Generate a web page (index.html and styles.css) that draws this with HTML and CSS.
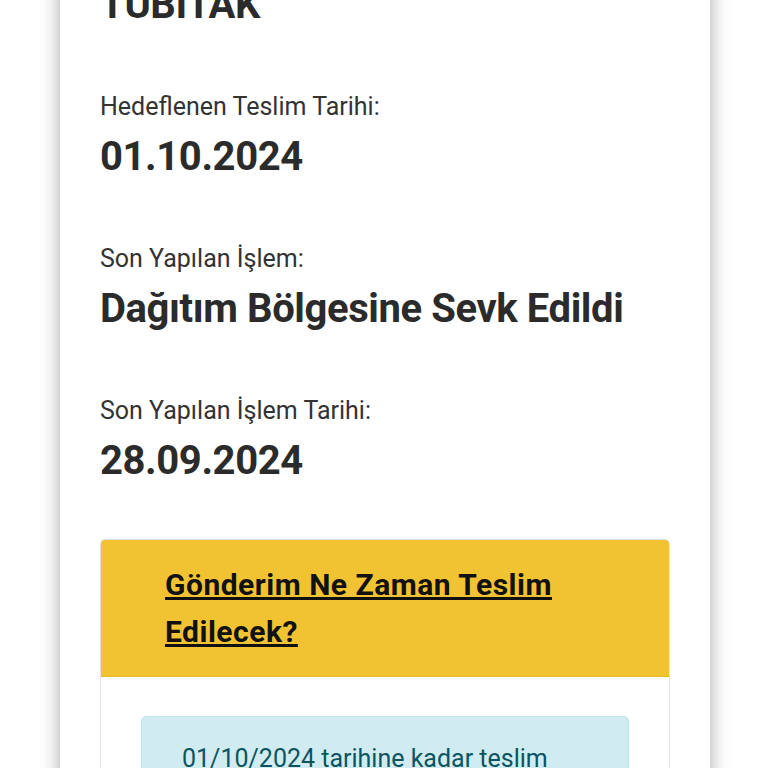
FILE: index.html
```html
<!DOCTYPE html>
<html lang="tr">
<head>
  <meta charset="UTF-8">
  <title>Gönderi Takip</title>
  <meta name="viewport" content="width=device-width, initial-scale=1.0">
  <link rel="stylesheet" href="styles.css">
</head>
<body>

  <main class="card">
    <!-- Gönderi bilgileri -->
    <div class="field">
      <p class="field-value">TUBITAK</p>
    </div>

    <div class="field">
      <p class="field-label">Hedeflenen Teslim Tarihi:</p>
      <p class="field-value">01.10.2024</p>
    </div>

    <div class="field">
      <p class="field-label">Son Yapılan İşlem:</p>
      <p class="field-value">Dağıtım Bölgesine Sevk Edildi</p>
    </div>

    <div class="field">
      <p class="field-label">Son Yapılan İşlem Tarihi:</p>
      <p class="field-value">28.09.2024</p>
    </div>

    <!-- Teslim bilgisi kutusu -->
    <section class="faq">
      <div class="faq-header">
        <a href="#" class="faq-title">Gönderim Ne Zaman Teslim Edilecek?</a>
      </div>
      <div class="faq-body">
        <div class="alert-info">
          01/10/2024 tarihine kadar teslim edilmesi planlanmaktadır.
        </div>
      </div>
    </section>
  </main>

</body>
</html>
```

FILE: styles.css
```css
body {
  font-family: Roboto, 'Liberation Sans', sans-serif;
  margin: 0;
  padding: 0;
  background: #fff;
  color: #333;
}

p {
  margin: 0;
}

.card {
  width: 650px;
  margin: -19px 0 0 60px;
  padding: 0 40px 40px 40px;
  box-sizing: border-box;
  background: #fff;
  box-shadow: 0 0 18px rgba(0,0,0,0.35);
}

.field {
  margin-bottom: 60px;
}

.field-label {
  font-size: 25px;
  line-height: 36px;
  margin-bottom: 8px;
  color: #333;
}

.field-value {
  font-size: 40px;
  line-height: 48px;
  font-weight: bold;
  letter-spacing: -0.4px;
  color: #2b2b2b;
}

.faq {
  margin-top: -6px;
  border: 1px solid #e2e2e2;
  border-radius: 5px;
  overflow: hidden;
}

.faq-header {
  background-color: #f1c232;
  padding: 21px 64px 21px 64px;
  border-bottom: 1px solid #e4b62a;
}

.faq-title {
  font-size: 30px;
  line-height: 47px;
  font-weight: bold;
  letter-spacing: 0.5px;
  color: #111;
  text-decoration: underline;
}

.faq-body {
  padding: 39px 40px 40px 40px;
}

.alert-info {
  background-color: #d1ecf1;
  border: 1px solid #bee5eb;
  border-radius: 5px;
  color: #0c5460;
  padding: 24px 40px 19px 40px;
  font-size: 25px;
  line-height: 36px;
}
```
